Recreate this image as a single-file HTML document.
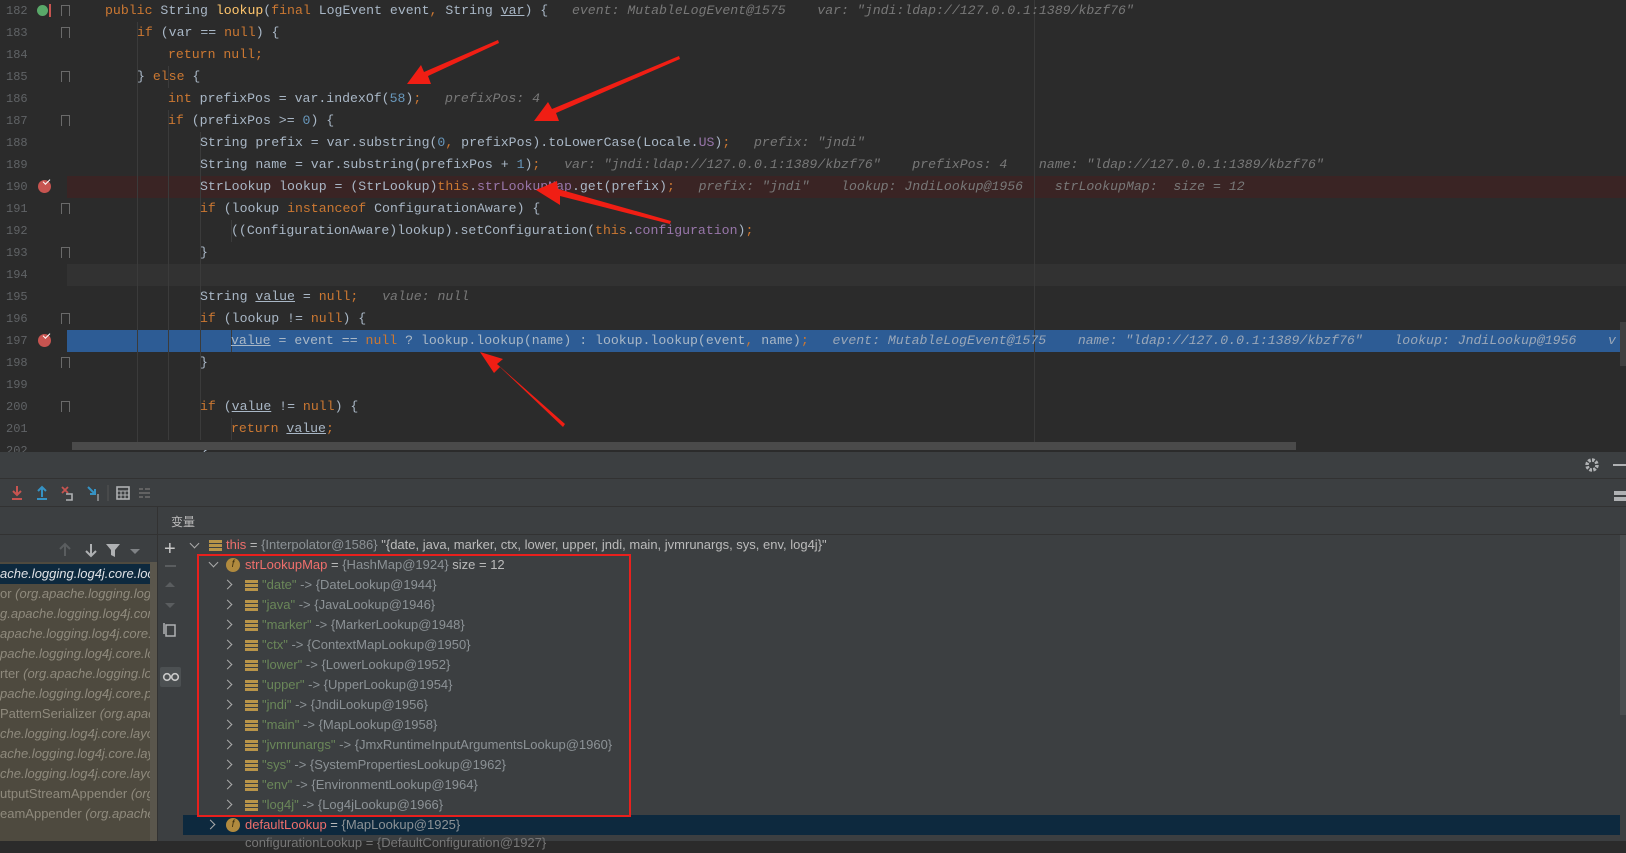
<!DOCTYPE html>
<html><head><meta charset="utf-8"><style>
*{margin:0;padding:0;box-sizing:border-box}
body{width:1626px;height:841px;overflow:hidden;background:#2b2b2b;position:relative;font-family:"Liberation Sans","Noto Sans CJK SC",sans-serif}
.ed{position:absolute;left:0;top:0;width:1626px;height:452px;background:#2b2b2b;overflow:hidden}
.ln{position:absolute;left:0;width:1626px;height:22px;line-height:22px;font-family:"Liberation Mono",monospace;font-size:13.2px;color:#a9b7c6;white-space:pre}
.num{position:absolute;left:6px;width:26px;color:#606366;font-size:12px}
.code{position:absolute}
.k{color:#cc7832}.n{color:#6897bb}.f{color:#9876aa}.h{color:#787878;font-style:italic}.u{text-decoration:underline}.y{color:#ffc66d}
.fold{position:absolute;left:61px;width:9px;height:11px;border:1px solid #6a6a6a;border-bottom:none;top:5px}
.bp{position:absolute;left:38px;top:4px;width:13px;height:13px;border-radius:50%;background:#c75450}
.bp:after{content:"";position:absolute;left:5px;top:-1px;width:6px;height:3px;border-left:1.5px solid #fff;border-bottom:1.5px solid #fff;transform:rotate(-45deg)}
.pan{position:absolute;left:0;top:452px;width:1626px;height:389px;background:#3c3f41}
.hl{position:absolute;height:1px;background:#323232}
.fr{position:absolute;left:0;width:150px;height:20px;line-height:20px;font-size:13px;white-space:nowrap;overflow:hidden;color:#8f8a7d;font-style:italic}
.fr b{font-weight:normal;font-style:normal;color:#8f8a7d}
.tr{position:absolute;height:20px;line-height:20px;font-size:13px;white-space:nowrap;color:#bbbbbb}
.nm{color:#ef6f6c}.gv{color:#8c9296}.s{color:#6a8759}
.chev{position:absolute;width:7px;height:7px;border-right:1.6px solid #aaa;border-bottom:1.6px solid #aaa}
.ic{position:absolute;width:13px;height:11px;background:repeating-linear-gradient(#b89449 0 3px,transparent 3px 4px)}
.fi{position:absolute;width:14px;height:14px;border-radius:50%;background:#b08a3e;color:#3c2f10;font-size:10px;line-height:14px;text-align:center;font-style:italic}
</style></head><body>
<div class="ed">
<div style="position:absolute;top:176px;width:1560px;height:22px;background:#3a2424;left:67px"></div>
<div style="position:absolute;left:67px;top:264px;width:1560px;height:22px;background:#323232"></div>
<div style="position:absolute;left:67px;top:330px;width:1560px;height:22px;background:#2d5c95"></div>
<div style="position:absolute;left:1034px;top:0;width:1px;height:442px;background:#3a3a3a"></div>
<div style="position:absolute;left:137px;top:22px;width:1px;height:420px;background:#3b3b3b"></div>
<div style="position:absolute;left:168px;top:66px;width:1px;height:22px;background:#3b3b3b"></div>
<div style="position:absolute;left:168px;top:110px;width:1px;height:330px;background:#3b3b3b"></div>
<div style="position:absolute;left:200px;top:132px;width:1px;height:308px;background:#3b3b3b"></div>
<div style="position:absolute;left:231px;top:220px;width:1px;height:22px;background:#3b3b3b"></div>
<div style="position:absolute;left:231px;top:330px;width:1px;height:22px;background:#3b3b3b"></div>
<div style="position:absolute;left:231px;top:418px;width:1px;height:22px;background:#3b3b3b"></div>

<div class="ln" style="top:0"><span class="num">182</span><span style="position:absolute;left:37px;top:5px;width:11px;height:11px;border-radius:50%;background:#59a869"></span><span style="position:absolute;left:49px;top:4px;width:2px;height:13px;background:#c75450"></span><span class="fold"></span><span class="code" style="left:105px"><span class="k">public </span>String <span class="y">lookup</span>(<span class="k">final </span>LogEvent event<span class="k">, </span>String <span class="u">var</span>) {   <span class="h">event: MutableLogEvent@1575    var: "jndi:ldap://127.0.0.1:1389/kbzf76"</span></span></div>
<div class="ln" style="top:22px"><span class="num">183</span><span class="fold"></span><span class="code" style="left:137px"><span class="k">if </span>(var == <span class="k">null</span>) {</span></div>
<div class="ln" style="top:44px"><span class="num">184</span><span class="code" style="left:168px"><span class="k">return null;</span></span></div>
<div class="ln" style="top:66px"><span class="num">185</span><span class="fold"></span><span class="code" style="left:137px">} <span class="k">else </span>{</span></div>
<div class="ln" style="top:88px"><span class="num">186</span><span class="code" style="left:168px"><span class="k">int </span>prefixPos = var.indexOf(<span class="n">58</span>)<span class="k">;</span>   <span class="h">prefixPos: 4</span></span></div>
<div class="ln" style="top:110px"><span class="num">187</span><span class="fold"></span><span class="code" style="left:168px"><span class="k">if </span>(prefixPos >= <span class="n">0</span>) {</span></div>
<div class="ln" style="top:132px"><span class="num">188</span><span class="code" style="left:200px">String prefix = var.substring(<span class="n">0</span><span class="k">, </span>prefixPos).toLowerCase(Locale.<span class="f">US</span>)<span class="k">;</span>   <span class="h">prefix: "jndi"</span></span></div>
<div class="ln" style="top:154px"><span class="num">189</span><span class="code" style="left:200px">String name = var.substring(prefixPos + <span class="n">1</span>)<span class="k">;</span>   <span class="h">var: "jndi:ldap://127.0.0.1:1389/kbzf76"    prefixPos: 4    name: "ldap://127.0.0.1:1389/kbzf76"</span></span></div>
<div class="ln" style="top:176px"><span class="num">190</span><span class="bp"></span><span class="code" style="left:200px">StrLookup lookup = (StrLookup)<span class="k">this</span>.<span class="f">strLookupMap</span>.get(prefix)<span class="k">;</span>   <span class="h">prefix: "jndi"    lookup: JndiLookup@1956    strLookupMap:  size = 12</span></span></div>
<div class="ln" style="top:198px"><span class="num">191</span><span class="fold"></span><span class="code" style="left:200px"><span class="k">if </span>(lookup <span class="k">instanceof </span>ConfigurationAware) {</span></div>
<div class="ln" style="top:220px"><span class="num">192</span><span class="code" style="left:231px">((ConfigurationAware)lookup).setConfiguration(<span class="k">this</span>.<span class="f">configuration</span>)<span class="k">;</span></span></div>
<div class="ln" style="top:242px"><span class="num">193</span><span class="fold"></span><span class="code" style="left:200px">}</span></div>
<div class="ln" style="top:264px"><span class="num">194</span></div>
<div class="ln" style="top:286px"><span class="num">195</span><span class="code" style="left:200px">String <span class="u">value</span> = <span class="k">null;</span>   <span class="h">value: null</span></span></div>
<div class="ln" style="top:308px"><span class="num">196</span><span class="fold"></span><span class="code" style="left:200px"><span class="k">if </span>(lookup != <span class="k">null</span>) {</span></div>
<div class="ln" style="top:330px"><span class="num">197</span><span class="bp"></span><span class="code" style="left:231px"><span class="u">value</span> = event == <span class="k">null </span>? lookup.lookup(name) : lookup.lookup(event<span class="k">, </span>name)<span class="k">;</span>   <span class="h" style="color:#9aa7b8">event: MutableLogEvent@1575    name: "ldap://127.0.0.1:1389/kbzf76"    lookup: JndiLookup@1956    v</span></span></div>
<div class="ln" style="top:352px"><span class="num">198</span><span class="fold"></span><span class="code" style="left:200px">}</span></div>
<div class="ln" style="top:374px"><span class="num">199</span></div>
<div class="ln" style="top:396px"><span class="num">200</span><span class="fold"></span><span class="code" style="left:200px"><span class="k">if </span>(<span class="u">value</span> != <span class="k">null</span>) {</span></div>
<div class="ln" style="top:418px"><span class="num">201</span><span class="code" style="left:231px"><span class="k">return </span><span class="u">value</span><span class="k">;</span></span></div>
<div class="ln" style="top:440px"><span class="num">202</span><span class="code" style="left:200px">}</span></div>
<div style="position:absolute;left:72px;top:442px;width:1224px;height:8px;background:#4a4a4a"></div>
<div style="position:absolute;left:1620px;top:322px;width:6px;height:44px;background:#3f3f3f"></div>
</div>

<div class="pan">
<div class="hl" style="left:0;top:26px;width:1626px"></div>
<div class="hl" style="left:0;top:54px;width:1626px"></div>
<div class="hl" style="left:157px;top:82px;width:1469px"></div>
<div class="hl" style="left:0;top:82px;width:157px"></div>
<div style="position:absolute;left:157px;top:55px;width:1px;height:334px;background:#323232"></div>
<svg style="position:absolute;left:1583px;top:4px" width="18" height="18" viewBox="0 0 18 18"><circle cx="9" cy="9" r="5" fill="none" stroke="#afb1b3" stroke-width="3.5" stroke-dasharray="2.6 1.3"/><circle cx="9" cy="9" r="2" fill="#3c3f41"/></svg>
<div style="position:absolute;left:1613px;top:12px;width:13px;height:2px;background:#afb1b3"></div>
<div style="position:absolute;left:1614px;top:39px;width:12px;height:10px;background:repeating-linear-gradient(#afb1b3 0 4px,transparent 4px 6px)"></div>
<svg style="position:absolute;left:4px;top:31px" width="170" height="20">
<path d="M13 3v9M9 8l4 4 4-4M8 16h10" stroke="#c75450" stroke-width="2" fill="none"/>
<path d="M38 14V5M34 8l4-4 4 4M33 16h10" stroke="#3592c4" stroke-width="2" fill="none"/>
<path d="M58 4l6 6M64 4l-6 6" stroke="#c75450" stroke-width="1.8"/><path d="M62 11h6v6h-6" stroke="#afb1b3" stroke-width="1.6" fill="none"/>
<path d="M84 4l7 7M91 6v5h-5" stroke="#3592c4" stroke-width="2" fill="none"/><path d="M94 11v7" stroke="#afb1b3" stroke-width="1.2"/>
<line x1="104" y1="2" x2="104" y2="18" stroke="#555"/>
<rect x="113" y="4" width="12" height="12" fill="none" stroke="#afb1b3" stroke-width="1.6"/><path d="M113 8h12M117 8v8M121 8v8M113 12h12" stroke="#afb1b3"/>
<path d="M135 6h4M141 6h5M135 10h11M135 14h4M141 14h5" stroke="#6e6e6e" stroke-width="1.6"/>
</svg>
<div style="position:absolute;left:171px;top:61px;color:#bbbbbb;font-size:12px">变量</div>
<svg style="position:absolute;left:55px;top:89px" width="100" height="18"><path d="M10 15V3M5 8l5-5 5 5" stroke="#5a5d5f" stroke-width="2" fill="none"/><path d="M36 3v12M31 10l5 5 5-5" stroke="#afb1b3" stroke-width="2" fill="none"/><path d="M51 3h14l-5 6v7l-4-2V9z" fill="#afb1b3"/><path d="M75 8h10l-5 5z" fill="#7f8285"/></svg>
<div style="position:absolute;left:0;top:110px;width:157px;height:279px;background:#4e4a3f"></div>
<div style="position:absolute;left:150px;top:110px;width:7px;height:279px;background:#5a564c"></div>
<div class="fr" style="top:112px;background:#0d293e;color:#dfe1e5;width:150px">ache.logging.log4j.core.look</div>
<div class="fr" style="top:132px"><b>or </b>(org.apache.logging.log4</div>
<div class="fr" style="top:152px">g.apache.logging.log4j.core.</div>
<div class="fr" style="top:172px">apache.logging.log4j.core.l</div>
<div class="fr" style="top:192px">pache.logging.log4j.core.loo</div>
<div class="fr" style="top:212px"><b>rter </b>(org.apache.logging.lo</div>
<div class="fr" style="top:232px">pache.logging.log4j.core.p</div>
<div class="fr" style="top:252px"><b>PatternSerializer </b>(org.apach</div>
<div class="fr" style="top:272px">che.logging.log4j.core.layo</div>
<div class="fr" style="top:292px">ache.logging.log4j.core.lay</div>
<div class="fr" style="top:312px">che.logging.log4j.core.layo</div>
<div class="fr" style="top:332px"><b>utputStreamAppender </b>(org.</div>
<div class="fr" style="top:352px"><b>eamAppender </b>(org.apache.</div>
<div style="position:absolute;left:164px;top:87px;color:#c8c8c8;font-size:20px;line-height:20px">+</div>
<div style="position:absolute;left:165px;top:113px;width:11px;height:2px;background:#5a5d5f"></div>
<svg style="position:absolute;left:162px;top:125px" width="16" height="70"><path d="M3 10l5-5 5 5z" fill="#5a5d5f"/><path d="M3 26l5 5 5-5z" fill="#5a5d5f"/><rect x="4" y="48" width="9" height="11" fill="none" stroke="#afb1b3" stroke-width="1.5"/><path d="M2 46v11" stroke="#afb1b3" stroke-width="1.5"/></svg>
<div style="position:absolute;left:160px;top:215px;width:21px;height:20px;background:#4c5052;border-radius:2px"></div>
<svg style="position:absolute;left:162px;top:220px" width="18" height="10"><circle cx="5" cy="5" r="3.3" fill="none" stroke="#c8c8c8" stroke-width="1.6"/><circle cx="13" cy="5" r="3.3" fill="none" stroke="#c8c8c8" stroke-width="1.6"/></svg>
<div style="position:absolute;left:183px;top:363px;width:1437px;height:20px;background:#0d293e"></div>
<div style="position:absolute;left:1620px;top:83px;width:6px;height:180px;background:#4a4d4f"></div>
<div class="chev" style="left:191px;top:88px;transform:rotate(45deg)"></div>
<div class="ic" style="left:209px;top:88px"></div>
<div class="tr" style="left:226px;top:83px"><span class="nm">this</span> = <span class="gv">{Interpolator@1586}</span> "{date, java, marker, ctx, lower, upper, jndi, main, jvmrunargs, sys, env, log4j}"</div>
<div class="chev" style="left:210px;top:107px;transform:rotate(45deg)"></div>
<div class="fi" style="left:226px;top:106px">f</div>
<div class="tr" style="left:245px;top:103px"><span class="nm">strLookupMap</span> = <span class="gv">{HashMap@1924}</span>  size = 12</div>
<div class="chev" style="left:224px;top:129px;transform:rotate(-45deg)"></div><div class="ic" style="left:245px;top:128px"></div><div class="tr" style="left:262px;top:123px"><span class="s">"date"</span> <span class="gv">-&gt; {DateLookup@1944}</span></div>
<div class="chev" style="left:224px;top:149px;transform:rotate(-45deg)"></div><div class="ic" style="left:245px;top:148px"></div><div class="tr" style="left:262px;top:143px"><span class="s">"java"</span> <span class="gv">-&gt; {JavaLookup@1946}</span></div>
<div class="chev" style="left:224px;top:169px;transform:rotate(-45deg)"></div><div class="ic" style="left:245px;top:168px"></div><div class="tr" style="left:262px;top:163px"><span class="s">"marker"</span> <span class="gv">-&gt; {MarkerLookup@1948}</span></div>
<div class="chev" style="left:224px;top:189px;transform:rotate(-45deg)"></div><div class="ic" style="left:245px;top:188px"></div><div class="tr" style="left:262px;top:183px"><span class="s">"ctx"</span> <span class="gv">-&gt; {ContextMapLookup@1950}</span></div>
<div class="chev" style="left:224px;top:209px;transform:rotate(-45deg)"></div><div class="ic" style="left:245px;top:208px"></div><div class="tr" style="left:262px;top:203px"><span class="s">"lower"</span> <span class="gv">-&gt; {LowerLookup@1952}</span></div>
<div class="chev" style="left:224px;top:229px;transform:rotate(-45deg)"></div><div class="ic" style="left:245px;top:228px"></div><div class="tr" style="left:262px;top:223px"><span class="s">"upper"</span> <span class="gv">-&gt; {UpperLookup@1954}</span></div>
<div class="chev" style="left:224px;top:249px;transform:rotate(-45deg)"></div><div class="ic" style="left:245px;top:248px"></div><div class="tr" style="left:262px;top:243px"><span class="s">"jndi"</span> <span class="gv">-&gt; {JndiLookup@1956}</span></div>
<div class="chev" style="left:224px;top:269px;transform:rotate(-45deg)"></div><div class="ic" style="left:245px;top:268px"></div><div class="tr" style="left:262px;top:263px"><span class="s">"main"</span> <span class="gv">-&gt; {MapLookup@1958}</span></div>
<div class="chev" style="left:224px;top:289px;transform:rotate(-45deg)"></div><div class="ic" style="left:245px;top:288px"></div><div class="tr" style="left:262px;top:283px"><span class="s">"jvmrunargs"</span> <span class="gv">-&gt; {JmxRuntimeInputArgumentsLookup@1960}</span></div>
<div class="chev" style="left:224px;top:309px;transform:rotate(-45deg)"></div><div class="ic" style="left:245px;top:308px"></div><div class="tr" style="left:262px;top:303px"><span class="s">"sys"</span> <span class="gv">-&gt; {SystemPropertiesLookup@1962}</span></div>
<div class="chev" style="left:224px;top:329px;transform:rotate(-45deg)"></div><div class="ic" style="left:245px;top:328px"></div><div class="tr" style="left:262px;top:323px"><span class="s">"env"</span> <span class="gv">-&gt; {EnvironmentLookup@1964}</span></div>
<div class="chev" style="left:224px;top:349px;transform:rotate(-45deg)"></div><div class="ic" style="left:245px;top:348px"></div><div class="tr" style="left:262px;top:343px"><span class="s">"log4j"</span> <span class="gv">-&gt; {Log4jLookup@1966}</span></div>
<div class="chev" style="left:207px;top:369px;transform:rotate(-45deg)"></div><div class="fi" style="left:226px;top:366px">f</div>
<div class="tr" style="left:245px;top:363px"><span class="nm">defaultLookup</span> = <span class="gv">{MapLookup@1925}</span></div>
<div class="tr" style="left:245px;top:381px;color:#777">configurationLookup = {DefaultConfiguration@1927}</div>
<div style="position:absolute;left:197px;top:102px;width:434px;height:263px;border:2px solid #e8201d"></div>
</div>

<svg style="position:absolute;left:0;top:0" width="1626" height="841">
<g fill="#f01e14">
<polygon points="498,40 499,43 428,76 431,84 407,84 421,65 424,72"/>
<polygon points="679,56 680,59 556,113 559,121 534,121 548,102 552,109"/>
<polygon points="671,221 670,224 560,196 560,205 536,190 557,181 558,189"/>
<polygon points="565,424 563,427 500,367 494,373 480,352 503,359 497,364"/>
</g>
</svg>
</body></html>
